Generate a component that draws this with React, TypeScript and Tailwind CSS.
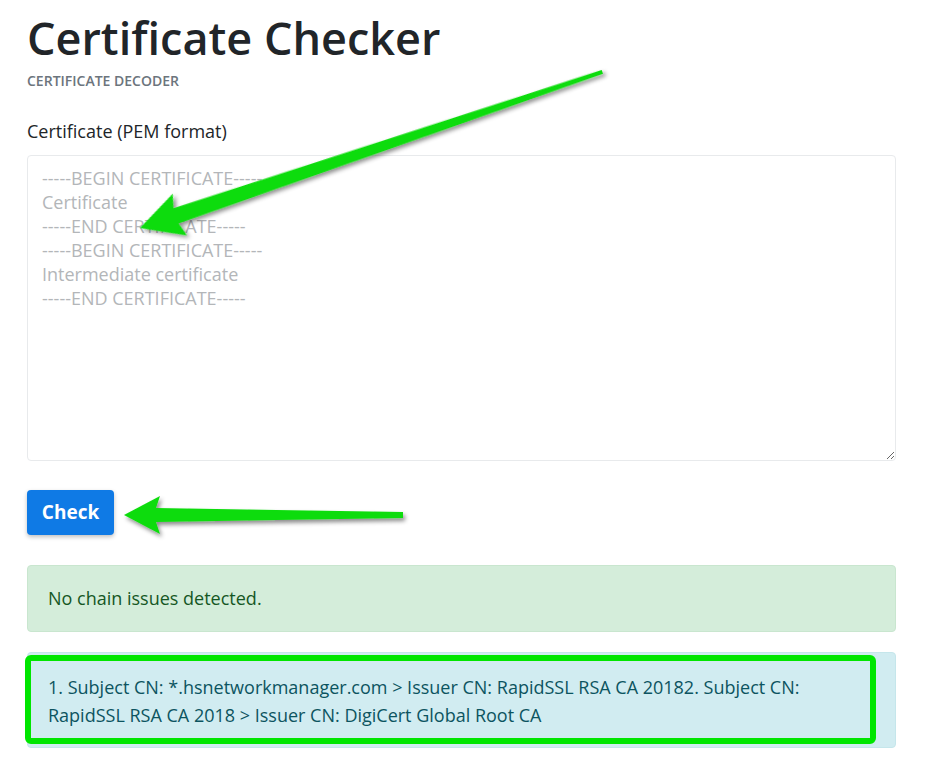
import React from 'react';

const font = { fontFamily: '"Open Sans", "Noto Sans", sans-serif' };

function Arrow({ x, y, angle, length, head, half, shaft, tail }: { x: number; y: number; angle: number; length: number; head: number; half: number; shaft: number; tail: number }) {
  // arrow pointing left in local coords, tip at origin
  const pts = [
    [0, 0],
    [head, -half],
    [head - 4, -shaft],
    [length, -tail],
    [length, tail],
    [head - 4, shaft],
    [head, half],
  ]
    .map((p) => p.join(','))
    .join(' ');
  return (
    <g transform={`translate(${x},${y}) rotate(${angle})`} filter="url(#arrowShadow)">
      <polygon points={pts} fill="#0fdc0f" strokeLinejoin="round" />
    </g>
  );
}

export default function App() {
  return (
    <div className="relative w-[941px] h-[763px] bg-white overflow-hidden text-[#212529]" style={font}>
      <div className="flex flex-col pl-[27px] pr-[45px]">
        {/* Header */}
        <h1 className="mt-[6px] text-[45px] leading-[64px] font-semibold text-[#212529]">Certificate Checker</h1>
        <p className="mt-[2px] text-[14px] leading-[18px] font-semibold uppercase text-[#6c757d]">Certificate Decoder</p>

        {/* Form */}
        <label className="mt-[29px] text-[18px] leading-[24px]">Certificate (PEM format)</label>
        <textarea
          className="mt-[12px] h-[306px] w-full resize-y rounded-[4px] border border-[#e8eaec] px-[14px] py-[10px] text-[18px] leading-[24px] placeholder:text-[#b3b6b9] outline-none"
          placeholder={'-----BEGIN CERTIFICATE-----\nCertificate\n-----END CERTIFICATE-----\n-----BEGIN CERTIFICATE-----\nIntermediate certificate\n-----END CERTIFICATE-----'}
        />

        <div className="mt-[29px]">
          <button className="h-[45px] w-[87px] rounded-[4px] bg-[#0f7ae5] text-[19px] font-bold text-white shadow-[0_2px_4px_rgba(0,0,0,0.25)]">
            Check
          </button>
        </div>

        {/* Results */}
        <div className="mt-[30px] flex h-[67px] items-center rounded-[4px] border border-[#c9e6cf] bg-[#d4edda] px-[20px] text-[18px] text-[#155724]">
          No chain issues detected.
        </div>

        <div className="mt-[20px] h-[96px] rounded-[4px] border border-[#c5e6eb] bg-[#d1ecf1] px-[20px] pt-[20px] text-[18px] leading-[28px] text-[#0c5460]">
          <p>
            1. Subject CN: *.hsnetworkmanager.com &gt; Issuer CN: RapidSSL RSA CA 20182. Subject CN: RapidSSL RSA CA 2018 &gt; Issuer CN: DigiCert Global Root CA
          </p>
        </div>
      </div>

      {/* Annotation overlay */}
      <svg className="pointer-events-none absolute inset-0" width="941" height="763">
        <defs>
          <filter id="arrowShadow" x="-20%" y="-50%" width="140%" height="200%">
            <feDropShadow dx="2" dy="3" stdDeviation="2" floodColor="#000" floodOpacity="0.45" />
          </filter>
        </defs>
        <Arrow x={140} y={228} angle={-18.66} length={488} head={42} half={22} shaft={8} tail={2} />
        <Arrow x={124} y={515} angle={0} length={279} head={36} half={19} shaft={7} tail={3} />
        <rect x="28" y="658" width="845" height="83" rx="3" fill="none" stroke="#00e600" strokeWidth="6" />
      </svg>
    </div>
  );
}
